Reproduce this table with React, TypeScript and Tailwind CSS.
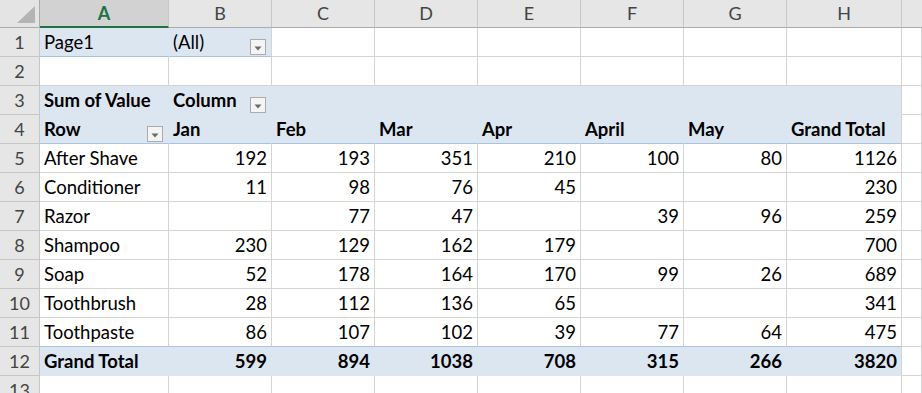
const cols = ["A", "B", "C", "D", "E", "F", "G", "H"]

type Row = { label: string; values: (number | null)[] }

const data: Row[] = [
  { label: "After Shave", values: [192, 193, 351, 210, 100, 80, 1126] },
  { label: "Conditioner", values: [11, 98, 76, 45, null, null, 230] },
  { label: "Razor", values: [null, 77, 47, null, 39, 96, 259] },
  { label: "Shampoo", values: [230, 129, 162, 179, null, null, 700] },
  { label: "Soap", values: [52, 178, 164, 170, 99, 26, 689] },
  { label: "Toothbrush", values: [28, 112, 136, 65, null, null, 341] },
  { label: "Toothpaste", values: [86, 107, 102, 39, 77, 64, 475] },
]

const totals = [599, 894, 1038, 708, 315, 266, 3820]
const months = ["Jan", "Feb", "Mar", "Apr", "April", "May", "Grand Total"]

const gridCols = "grid grid-cols-[40px_129px_repeat(6,103px)_115px_1fr]"

function Dropdown() {
  return (
    <div className="mb-px mr-px flex h-4 w-4 shrink-0 items-center justify-center self-end border border-[#ababab] bg-[#f4f4f4]">
      <svg width="8" height="5" viewBox="0 0 8 5" className="mt-0.5">
        <path d="M0.5 0.5 L7.5 0.5 L4 4.5 Z" fill="#6a6a6a" />
      </svg>
    </div>
  )
}

function RowHead({ n }: { n: number }) {
  return (
    <div className="flex h-[29px] items-center justify-center border-r border-b border-[#c6c6c6] bg-[#e6e6e6] pt-px text-[18px] text-[#444]">
      {n}
    </div>
  )
}

function Cell({
  children,
  className = "",
}: {
  children?: React.ReactNode
  className?: string
}) {
  return (
    <div
      className={`flex h-[29px] items-center overflow-hidden whitespace-nowrap border-r border-b pt-px pl-[4px] pr-[4px] ${className}`}
    >
      {children}
    </div>
  )
}

const plain = "border-[#d4d4d4] bg-white"
const blue = "bg-[#dce6f1] border-[#dce6f1]"

export default function App() {
  return (
    <div
      className="h-[393px] w-[922px] overflow-hidden bg-white text-[18.5px] text-black"
      style={{ fontFamily: "Lato, 'Open Sans', sans-serif" }}
    >
      {/* column headers */}
      <div className={gridCols}>
        <div className="flex h-[28px] items-end justify-end border-r border-b border-[#ababab] bg-[#e4e4e4] pr-1 pb-1">
          <svg width="18" height="17" viewBox="0 0 18 17">
            <path d="M18 0 L18 17 L0 17 Z" fill="#b4b4b4" />
          </svg>
        </div>
        {cols.map((c) => (
          <div
            key={c}
            className={
              c === "A"
                ? "flex h-[28px] items-center justify-center border-r border-b-2 border-r-[#c6c6c6] border-b-[#217346] bg-[#d2d2d2] pt-px text-[18px] font-bold text-[#217346]"
                : "flex h-[28px] items-center justify-center border-r border-b border-r-[#c6c6c6] border-b-[#ababab] bg-[#e6e6e6] text-[18px] text-[#444]"
            }
          >
            {c}
          </div>
        ))}
        <div className="h-[28px] border-b border-[#ababab] bg-[#e6e6e6]" />
      </div>

      {/* row 1 */}
      <div className={gridCols}>
        <RowHead n={1} />
        <Cell className="bg-[#dce6f1] border-r-[#dce6f1] border-b-[#a9c4e2]">Page1</Cell>
        <Cell className="justify-between bg-[#dce6f1] border-r-[#d4d4d4] border-b-[#a9c4e2] pr-0">
          <span>(All)</span>
          <Dropdown />
        </Cell>
        {cols.slice(2).map((c) => (
          <Cell key={c} className={plain} />
        ))}
        <Cell className={plain} />
      </div>

      {/* row 2 */}
      <div className={gridCols}>
        <RowHead n={2} />
        {cols.map((c) => (
          <Cell key={c} className={plain} />
        ))}
        <Cell className={plain} />
      </div>

      {/* row 3 */}
      <div className={gridCols}>
        <RowHead n={3} />
        <Cell className={`${blue} font-bold`}>Sum of Value</Cell>
        <Cell className={`${blue} justify-between pr-0 font-bold`}>
          <span>Column</span>
          <Dropdown />
        </Cell>
        {cols.slice(2).map((c) => (
          <Cell key={c} className={c === "H" ? "bg-[#dce6f1] border-b-[#dce6f1] border-r-[#d4d4d4]" : blue} />
        ))}
        <Cell className={plain} />
      </div>

      {/* row 4 */}
      <div className={gridCols}>
        <RowHead n={4} />
        <Cell className="justify-between bg-[#dce6f1] border-r-[#dce6f1] border-b-[#a9c4e2] pr-0 font-bold">
          <span>Row</span>
          <Dropdown />
        </Cell>
        {months.map((m, i) => (
          <Cell
            key={m}
            className={`bg-[#dce6f1] border-b-[#a9c4e2] font-bold ${i === 6 ? "border-r-[#d4d4d4]" : "border-r-[#dce6f1]"}`}
          >
            {m}
          </Cell>
        ))}
        <Cell className={plain} />
      </div>

      {/* data rows */}
      {data.map((r, ri) => (
        <div key={r.label} className={gridCols}>
          <RowHead n={ri + 5} />
          <Cell className={`${plain} ${ri === data.length - 1 ? "border-b-[#a9c4e2]" : ""}`}>
            {r.label}
          </Cell>
          {r.values.map((v, i) => (
            <Cell
              key={i}
              className={`${plain} justify-end ${ri === data.length - 1 ? "border-b-[#a9c4e2]" : ""}`}
            >
              {v ?? ""}
            </Cell>
          ))}
          <Cell className={plain} />
        </div>
      ))}

      {/* grand total */}
      <div className={gridCols}>
        <RowHead n={12} />
        <Cell className={`${blue} font-bold`}>Grand Total</Cell>
        {totals.map((t, i) => (
          <Cell
            key={i}
            className={`justify-end font-bold ${i === 6 ? "bg-[#dce6f1] border-b-[#dce6f1] border-r-[#d4d4d4]" : blue}`}
          >
            {t}
          </Cell>
        ))}
        <Cell className={plain} />
      </div>

      {/* row 13 */}
      <div className={gridCols}>
        <RowHead n={13} />
        {cols.map((c) => (
          <Cell key={c} className={plain} />
        ))}
        <Cell className={plain} />
      </div>
    </div>
  )
}
